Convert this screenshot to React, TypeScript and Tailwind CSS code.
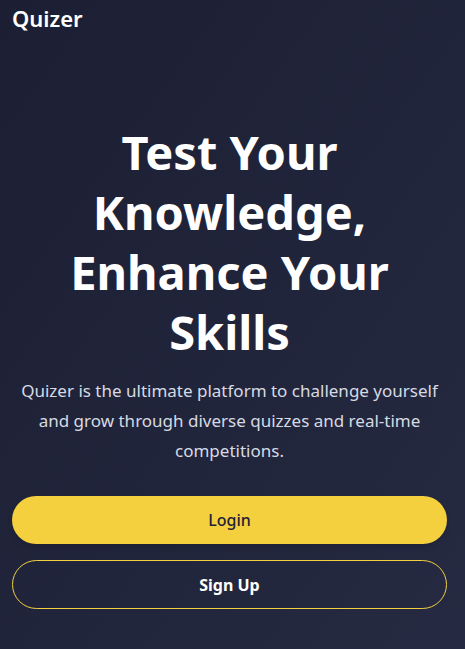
export default function App() {
  return (
    <div
      className="min-h-[649px] bg-gradient-to-br from-[#1c1f33] to-[#252a42] text-white flex flex-col"
      style={{ fontFamily: '"Noto Sans", "Open Sans", sans-serif' }}
    >
      {/* Header */}
      <header className="px-3 pt-[4px]">
        <h1 className="text-[22px] font-semibold leading-[28px]">Quizer</h1>
      </header>

      {/* Hero */}
      <main className="flex flex-col items-center pl-3 pr-[18px] pt-[90px]">
        <h2 className="text-center text-[47px] font-bold leading-[60px] px-10">
          Test Your Knowledge, Enhance Your Skills
        </h2>
        <p className="mt-[14px] text-center text-[17px] leading-[30px] text-[#d7dae3]">
          Quizer is the ultimate platform to challenge yourself and grow through diverse quizzes and real-time competitions.
        </p>

        <div className="mt-[30px] w-full flex flex-col gap-4">
          <button className="h-12 w-full rounded-full bg-[#f4d03f] text-[#1f2235] text-[16px] font-medium shadow-md">
            Login
          </button>
          <button className="h-[49px] w-full rounded-full border border-[#f4d03f] text-white text-[16px] font-bold">
            Sign Up
          </button>
        </div>
      </main>
    </div>
  );
}
